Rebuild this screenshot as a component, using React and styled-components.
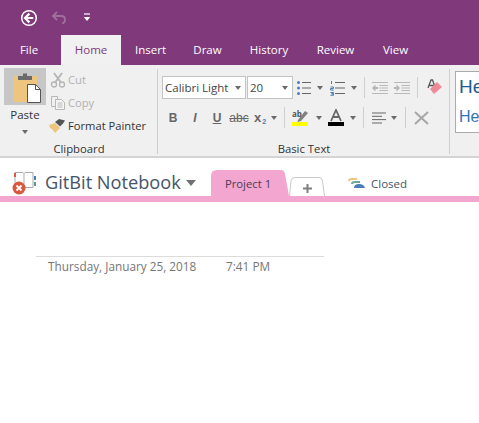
import React from 'react';
import styled, { createGlobalStyle } from 'styled-components';

const GlobalStyle = createGlobalStyle`
  html, body { margin: 0; padding: 0; background: #fff; }
  body { font-family: "Open Sans", "Noto Sans", sans-serif; overflow: hidden; }
`;

const Page = styled.div`
  width: 479px;
  height: 423px;
  overflow: hidden;
  background: #fff;
  display: flex;
  flex-direction: column;
`;

const TitleBar = styled.div`
  height: 35px;
  flex: none;
  background: #80397b;
  display: flex;
  align-items: center;
  padding-left: 20px;
`;

const QuickBtn = styled.div`
  display: flex;
  margin-right: ${p => p.$gap || 0}px;
`;

const TabRow = styled.div`
  height: 30px;
  flex: none;
  background: #80397b;
  display: flex;
`;

const RibbonTab = styled.div`
  box-sizing: border-box;
  width: ${p => p.$w}px;
  display: flex;
  align-items: center;
  justify-content: center;
  font-size: 11.5px;
  padding: 0 ${p => p.$pr || 0}px 1px 0;
  color: ${p => (p.$active ? '#80397b' : '#fff')};
  background: ${p => (p.$active ? '#f1f1f1' : 'transparent')};
`;

const Ribbon = styled.div`
  box-sizing: border-box;
  height: 93px;
  flex: none;
  background: #f0f0f0;
  border-bottom: 2px solid #d4d4d4;
  display: flex;
  overflow: hidden;
`;

const Group = styled.div`
  width: ${p => p.$w}px;
  flex: none;
  position: relative;
  display: flex;
  flex-direction: column;
  &::after {
    content: '';
    position: absolute;
    right: 0;
    top: 4px;
    bottom: 2px;
    width: 1px;
    background: #cfcfcf;
  }
`;

const GroupBody = styled.div`
  height: 76px;
  display: flex;
`;

const GroupLabel = styled.div`
  height: 15px;
  line-height: 15px;
  font-size: 11.3px;
  text-align: center;
  color: #333;
`;

const PasteCol = styled.div`
  width: 42px;
  margin: 3px 4px 0 4px;
  display: flex;
  flex-direction: column;
  align-items: center;
`;

const PasteBtn = styled.div`
  box-sizing: border-box;
  width: 42px;
  height: 37px;
  background: #c6c6c6;
  padding: 5px 0 0 8px;
  display: flex;
  align-items: flex-start;
`;

const PasteLabel = styled.div`
  font-size: 11.5px;
  line-height: 16px;
  margin-top: 2px;
  color: #333;
`;

const Caret = styled.span`
  display: inline-block;
  flex: none;
  width: 0;
  height: 0;
  border-left: 3.5px solid transparent;
  border-right: 3.5px solid transparent;
  border-top: 4px solid #6a6a6a;
  margin-left: ${p => p.$ml || 0}px;
  margin-top: ${p => p.$mt || 0}px;
`;

const SmallCol = styled.div`
  display: flex;
  flex-direction: column;
  padding-top: 3px;
`;

const SmallBtn = styled.div`
  height: 23px;
  display: flex;
  align-items: center;
  gap: 2px;
  font-size: 11.2px;
  white-space: nowrap;
  color: ${p => (p.$disabled ? '#b1b1b1' : '#333')};
`;

const IconSlot = styled.div`
  width: 16px;
  height: 16px;
  display: flex;
  align-items: center;
  justify-content: center;
`;

const TextRows = styled.div`
  display: flex;
  flex-direction: column;
  padding: 11px 0 0 4px;
`;

const ToolRow = styled.div`
  display: flex;
  align-items: center;
  height: 23px;
  margin-bottom: ${p => p.$mb || 0}px;
`;

const Combo = styled.div`
  box-sizing: border-box;
  width: ${p => p.$w}px;
  height: 23px;
  flex: none;
  margin-right: 1px;
  background: #fff;
  border: 1px solid #c3c3c3;
  display: flex;
  align-items: center;
  justify-content: space-between;
  padding: 0 4px 0 2px;
  font-size: 11.5px;
  color: #444;
`;

const Tool = styled.div`
  width: ${p => p.$w || 22}px;
  margin-left: ${p => p.$ml || 0}px;
  height: 20px;
  display: flex;
  align-items: center;
  justify-content: center;
  flex: none;
`;

const Sep = styled.div`
  width: 1px;
  height: 21px;
  background: #cfcfcf;
  margin: 0 ${p => p.$r ?? 7}px 0 ${p => p.$l ?? 7}px;
  flex: none;
`;

const StylesBox = styled.div`
  box-sizing: border-box;
  margin: 6px 0 0 5px;
  width: 60px;
  height: 62px;
  background: #fff;
  border: 1px solid #ababab;
  padding-left: 3px;
  font-family: "Liberation Sans", sans-serif;
`;

const StyleOne = styled.div`
  font-size: 19px;
  line-height: 22px;
  margin-top: 4px;
  color: #1e5c8e;
`;

const StyleTwo = styled.div`
  font-size: 16px;
  line-height: 20px;
  margin-top: 9px;
  color: #2e75b6;
`;

const SectionBar = styled.div`
  height: 38px;
  flex: none;
  display: flex;
  align-items: flex-end;
  padding-left: 12px;
`;

const Notebook = styled.div`
  display: flex;
  align-items: center;
  height: 24px;
  margin-bottom: 1px;
`;

const NotebookName = styled.div`
  font-size: 18.2px;
  margin: -2px 0 0 9px;
  width: 141px;
  color: #44546a;
  white-space: nowrap;
`;

const NotebookCaret = styled.span`
  width: 0;
  height: 0;
  border-left: 5px solid transparent;
  border-right: 5px solid transparent;
  border-top: 6px solid #707070;
  margin-right: 15px;
`;

const SectionTab = styled.div`
  position: relative;
  width: ${p => p.$w}px;
  height: ${p => p.$h}px;
  flex: none;
  display: flex;
  align-items: center;
  justify-content: center;
  font-size: 11.3px;
  color: #4d3a5a;
  svg.shape {
    position: absolute;
    inset: 0;
  }
  > span {
    position: relative;
    padding-right: ${p => p.$pr || 0}px;
  }
`;

const ClosedLink = styled.div`
  height: 26px;
  display: flex;
  align-items: center;
  gap: 6px;
  margin-left: 23px;
  font-size: 11.5px;
  color: #44546a;
`;

const PinkRule = styled.div`
  height: 6px;
  flex: none;
  background: #f3a6cf;
`;

const NoteArea = styled.div`
  flex: 1;
  padding: 54px 0 0 36px;
`;

const NoteHeader = styled.div`
  box-sizing: border-box;
  width: 288px;
  border-top: 1px solid #dcdcdc;
  padding: 2px 0 0 12px;
  display: flex;
  font-size: 11.8px;
  line-height: 15px;
  color: #767676;
  white-space: nowrap;
`;

const NoteDate = styled.span`
  width: 178px;
  flex: none;
`;

const StyleLetter = styled.span`
  font-family: "Liberation Sans", sans-serif;
  font-weight: ${p => p.$weight || 400};
  font-style: ${p => (p.$italic ? 'italic' : 'normal')};
  text-decoration: ${p => p.$deco || 'none'};
  font-size: ${p => p.$size || 12}px;
  color: ${p => p.$color || '#666'};
`;

const Sub = styled.sub`
  font-size: 7px;
  color: #4a7fb5;
  vertical-align: -2px;
  margin-left: 1px;
`;

const BackIcon = () => (
  <svg width="18" height="18" viewBox="0 0 18 18">
    <circle cx="9" cy="9" r="7.3" fill="none" stroke="#fff" strokeWidth="1.5" />
    <path d="M9.4 4.6 5 9l4.4 4.4M5.3 9h8" fill="none" stroke="#fff" strokeWidth="2.2" />
  </svg>
);

const UndoIcon = () => (
  <svg width="16" height="16" viewBox="0 0 16 16">
    <path d="M6 2 2 6l4 4M2.5 6H10c2.5 0 4 1.6 4 3.5S12.8 13 11 13.5" fill="none" stroke="#a0709c" strokeWidth="1.8" />
  </svg>
);

const QatIcon = () => (
  <svg width="8" height="9" viewBox="0 0 8 9">
    <path d="M1 1h6" stroke="#fff" strokeWidth="1.2" />
    <path d="M.8 4h6.4L4 8z" fill="#fff" />
  </svg>
);

const PasteIcon = () => (
  <svg width="30" height="31" viewBox="0 0 30 31">
    <rect x="1" y="3" width="24" height="26" fill="#eec57e" />
    <path d="M6 7V3h5V.5h4V3h5v4z" fill="#6b6b6b" />
    <path d="M15.5 11.5h8l5 5v13h-13z" fill="#fff" stroke="#555" />
    <path d="M23.5 11.5v5h5" fill="none" stroke="#555" />
  </svg>
);

const CutIcon = () => (
  <svg width="16" height="16" viewBox="0 0 16 16">
    <path d="M4 1l6.5 9M12 1 5.5 10" stroke="#b4b4b4" strokeWidth="1.8" fill="none" />
    <circle cx="4" cy="12.5" r="2.5" fill="none" stroke="#b4b4b4" strokeWidth="1.3" />
    <circle cx="12" cy="12.5" r="2.5" fill="none" stroke="#b4b4b4" strokeWidth="1.3" />
  </svg>
);

const CopyIcon = () => (
  <svg width="16" height="16" viewBox="0 0 16 16" fill="none" stroke="#b8b8b8">
    <path d="M1.5 1.5h6v3M5 11.5H1.5v-10" />
    <path d="M5.5 4.5h6l3 3v7h-9z" fill="#f5f5f5" />
    <path d="M7.5 8h5M7.5 10h5M7.5 12h5" />
  </svg>
);

const PainterIcon = () => (
  <svg width="17" height="17" viewBox="0 0 17 17" style={{ marginLeft: -2, flex: 'none' }}>
    <path d="M0 8l6-2 5 5-5 5-3-4-2-1z" fill="#eec57e" />
    <path d="M6 5l4-3 6 1.5-2 3-3 3z" fill="#555" />
  </svg>
);

const BulletIcon = () => (
  <svg width="14" height="16" viewBox="0 0 14 16">
    <g fill="#4a7fb5"><circle cx="1.5" cy="2.5" r="1.5" /><circle cx="1.5" cy="8" r="1.5" /><circle cx="1.5" cy="13.5" r="1.5" /></g>
    <path d="M5 2.5h9M5 8h9M5 13.5h9" stroke="#666" />
  </svg>
);

const NumberIcon = () => (
  <svg width="15" height="16" viewBox="0 0 15 16">
    <path d="M1.5 1v3M.5 7h3v1.5h-3V10h3M.5 12.500h3v1.300h-2 2v1.500h-3" fill="none" stroke="#4a7fb5" />
    <path d="M5 2.5h10M5 8h10M5 13.5h10" stroke="#666" />
  </svg>
);

const IndentIcon = ({ flip }) => (
  <svg width="16" height="14" viewBox="0 0 16 14">
    <path d="M0 1.5h16M7.5 4.5H16M7.5 7H16M7.5 9.5H16M0 12.5h16" stroke="#b9b9b9" />
    <path d={flip ? 'M6 7 2.5 3.5V6H0v2h2.5v2.5z' : 'M0 7l3.500-3.500V6H6v2H3.500v2.500z'} fill="#b4b4b4" />
  </svg>
);

const EraserIcon = () => (
  <svg width="16" height="17" viewBox="0 0 16 17">
    <path d="M1 9 4 1h1.5l3 8M2.300 6.500h4.500" fill="none" stroke="#555" strokeWidth="1.3" />
    <path d="M3 10l7-7 5 5-8 7z" fill="#ec8a97" />
  </svg>
);

const HighlightIcon = () => (
  <svg width="17" height="17" viewBox="0 0 17 17">
    <text x="0" y="8" fontSize="8" fontFamily="Open Sans" fontWeight="700" fill="#555">ab</text>
    <path d="m6 11 7-9 3 2-7 8-3.500 1z" fill="#808080" />
    <rect x="0" y="13" width="16" height="4" fill="#ffff00" />
  </svg>
);

const FontColorIcon = () => (
  <svg width="16" height="17" viewBox="0 0 16 17">
    <path d="M3 12 8 1l5 11M5 8h6" fill="none" stroke="#666" strokeWidth="1.8" />
    <rect x="0" y="13" width="16" height="4" fill="#000" />
  </svg>
);

const AlignIcon = () => (
  <svg width="14" height="12" viewBox="0 0 14 12">
    <path d="M0 1h14M0 4.300h10M0 7.600h14M0 11h10" stroke="#666" />
  </svg>
);

const ClearIcon = () => (
  <svg width="15" height="14" viewBox="0 0 15 14">
    <path d="m1 1 13 12M14 1 1 13" stroke="#a6a6a6" strokeWidth="2" />
  </svg>
);

const NotebookIcon = () => (
  <svg width="24" height="24" viewBox="0 0 24 24">
    <path d="M3 1.500h8l1 1 1-1h8v15h-8l-1 1-1-1H3z" fill="#fff" stroke="#a9a9a9" />
    <path d="M12 2.500v14" stroke="#a9a9a9" />
    <rect x="2" y="2" width="2" height="4" fill="#e0573a" />
    <rect x="22" y="5" width="2" height="4" fill="#4a7fb5" />
    <rect x="22" y="11" width="2" height="4" fill="#5f9a8d" />
    <circle cx="7" cy="17" r="6.500" fill="#d9583e" />
    <path d="m4.500 14.500 5 5M9.500 14.500l-5 5" stroke="#fff" strokeWidth="1.8" />
  </svg>
);

const ClosedIcon = () => (
  <svg width="17" height="12" viewBox="0 0 17 12">
    <path d="M0 4q0-3 4-3h5v2H4Q2 3 2 4z" fill="#eec57e" />
    <path d="M3 7q0-3 4-3h5v2H7Q5 6 5 7z" fill="#70a59a" />
    <path d="M6 11q0-4 5-4 5 0 6 4z" fill="#4a7fb5" />
  </svg>
);

const App = () => (
  <Page>
    <GlobalStyle />
    <TitleBar>
      <QuickBtn $gap={13}><BackIcon /></QuickBtn>
      <QuickBtn $gap={16}><UndoIcon /></QuickBtn>
      <QuickBtn><QatIcon /></QuickBtn>
    </TitleBar>
    <TabRow>
      <RibbonTab $w={61} $pr={3}>File</RibbonTab>
      <RibbonTab $w={60} $active>Home</RibbonTab>
      <RibbonTab $w={59}>Insert</RibbonTab>
      <RibbonTab $w={55}>Draw</RibbonTab>
      <RibbonTab $w={68}>History</RibbonTab>
      <RibbonTab $w={65}>Review</RibbonTab>
      <RibbonTab $w={55}>View</RibbonTab>
    </TabRow>
    <Ribbon>
      <Group $w={158}>
        <GroupBody>
          <PasteCol>
            <PasteBtn><PasteIcon /></PasteBtn>
            <PasteLabel>Paste</PasteLabel>
            <Caret $mt={7} />
          </PasteCol>
          <SmallCol>
            <SmallBtn $disabled><IconSlot><CutIcon /></IconSlot>Cut</SmallBtn>
            <SmallBtn $disabled><IconSlot><CopyIcon /></IconSlot>Copy</SmallBtn>
            <SmallBtn><IconSlot><PainterIcon /></IconSlot>Format Painter</SmallBtn>
          </SmallCol>
        </GroupBody>
        <GroupLabel>Clipboard</GroupLabel>
      </Group>
      <Group $w={292}>
        <GroupBody>
          <TextRows>
            <ToolRow $mb={7}>
              <Combo $w={84}>Calibri Light<Caret /></Combo>
              <Combo $w={46}>20<Caret /></Combo>
              <Tool $w={14} $ml={3}><BulletIcon /></Tool>
              <Caret $ml={6} />
              <Tool $w={15} $ml={7}><NumberIcon /></Tool>
              <Caret $ml={6} />
              <Sep $l={7} $r={7} />
              <Tool $w={16}><IndentIcon /></Tool>
              <Tool $w={16} $ml={6}><IndentIcon flip /></Tool>
              <Sep $l={7} $r={9} />
              <Tool $w={16}><EraserIcon /></Tool>
            </ToolRow>
            <ToolRow>
              <Tool><StyleLetter $weight={700}>B</StyleLetter></Tool>
              <Tool><StyleLetter $italic $weight={700}>I</StyleLetter></Tool>
              <Tool><StyleLetter $weight={700} $deco="underline">U</StyleLetter></Tool>
              <Tool><StyleLetter $deco="line-through">abc</StyleLetter></Tool>
              <Tool $w={20}><StyleLetter $weight={700} $size={13}>x<Sub>2</Sub></StyleLetter></Tool>
              <Caret $ml={1} />
              <Sep $l={7} $r={7} />
              <Tool $w={17}><HighlightIcon /></Tool>
              <Caret $ml={7} />
              <Tool $w={16} $ml={6}><FontColorIcon /></Tool>
              <Caret $ml={6} />
              <Sep $l={7} $r={8} />
              <Tool $w={14}><AlignIcon /></Tool>
              <Caret $ml={5} />
              <Sep $l={8} $r={8} />
              <Tool $w={15}><ClearIcon /></Tool>
            </ToolRow>
          </TextRows>
        </GroupBody>
        <GroupLabel>Basic Text</GroupLabel>
      </Group>
      <StylesBox>
        <StyleOne>Heading</StyleOne>
        <StyleTwo>Heading</StyleTwo>
      </StylesBox>
    </Ribbon>
    <SectionBar>
      <Notebook>
        <NotebookIcon />
        <NotebookName>GitBit Notebook</NotebookName>
        <NotebookCaret />
      </Notebook>
      <SectionTab $w={78} $h={26} $pr={4}>
        <svg className="shape" width="78" height="26" viewBox="0 0 78 26">
          <path d="M0 26V6q0-6 6-6h64q3 0 4 4l4 22z" fill="#f3a6cf" />
        </svg>
        <span>Project 1</span>
      </SectionTab>
      <SectionTab $w={36} $h={19}>
        <svg className="shape" width="36" height="19" viewBox="0 0 36 19">
          <path d="M.5 19 2 4Q2.500.5 6 .5h24q3 0 3.500 3.500l2 15" fill="#fff" stroke="#c8c8c8" />
        </svg>
        <span>
          <svg width="9" height="9" viewBox="0 0 9 9" style={{ display: 'block', marginTop: 3 }}>
            <path d="M4.500 0v9M0 4.500h9" stroke="#7f7f7f" strokeWidth="2" />
          </svg>
        </span>
      </SectionTab>
      <ClosedLink><ClosedIcon />Closed</ClosedLink>
    </SectionBar>
    <PinkRule />
    <NoteArea>
      <NoteHeader>
        <NoteDate>Thursday, January 25, 2018</NoteDate>
        <span>7:41 PM</span>
      </NoteHeader>
    </NoteArea>
  </Page>
);

export default App;
